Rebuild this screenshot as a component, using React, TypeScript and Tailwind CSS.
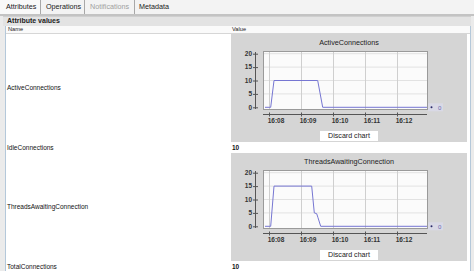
import React from "react";

type Pt = [number, number];

const Y0 = 56.3;
const K = 2.68;
const yv = (v: number) => Y0 - v * K;

const TICKS = [38, 70, 102, 134, 166];
const TIME_LABELS = ["16:08", "16:09", "16:10", "16:11", "16:12"];

const activePts: Pt[] = [
  [34, 0],
  [39.7, 0],
  [43, 10],
  [86.7, 10],
  [91.7, 0],
  [196, 0],
];

const threadsPts: Pt[] = [
  [34, 0],
  [39.7, 0],
  [43, 15],
  [80.7, 15],
  [83.3, 5],
  [85.7, 4.7],
  [87, 3.2],
  [89.7, 0],
  [196, 0],
];

function ChartCell({ title, points }: { title: string; points: Pt[] }) {
  const d = points.map(([x, v], i) => `${i ? "L" : "M"}${x} ${yv(v).toFixed(2)}`).join(" ");
  return (
    <div className="flex h-[108px] w-[236px] flex-col items-center bg-[#d5d5d5]">
      <div className="h-[17px] text-[7.2px] leading-[18px] text-[#222]">{title}</div>
      <svg width="236" height="80" className="block font-['Liberation_Sans',sans-serif]">
        {/* plot area */}
        <rect x="32.5" y="0.5" width="164" height="58" fill="#fbfbfb" stroke="#9a9a9a" strokeWidth="1" />
        {[5, 10, 15, 20].map((v) => (
          <line key={v} x1="33" x2="196" y1={yv(v)} y2={yv(v)} stroke="#e2e2e2" strokeWidth="1" />
        ))}
        {TICKS.map((x) => (
          <line key={x} x1={x + 0.5} x2={x + 0.5} y1="1" y2="58" stroke="#cfcfcf" strokeWidth="1" />
        ))}
        <path d={d} fill="none" stroke="#7676d2" strokeWidth="1" />

        {/* y axis */}
        <line x1="24.5" x2="24.5" y1="1" y2="58" stroke="#555" strokeWidth="1" />
        {[0, 5, 10, 15, 20].map((v) => (
          <g key={v}>
            <line x1="22" x2="27" y1={yv(v) + 0.5} y2={yv(v) + 0.5} stroke="#555" strokeWidth="1" />
            <text x="21" y={yv(v) + 2.3} textAnchor="end" className="fill-[#333] text-[6.5px] font-bold">
              {v}
            </text>
          </g>
        ))}

        {/* x axis */}
        <line x1="32" x2="196" y1="63.5" y2="63.5" stroke="#555" strokeWidth="1" />
        {TICKS.map((x, i) => (
          <g key={x}>
            <line x1={x + 0.5} x2={x + 0.5} y1="61.5" y2="65.5" stroke="#555" strokeWidth="1" />
            <text x={x + 7} y="71.5" textAnchor="middle" className="fill-[#333] text-[6.5px] font-bold">
              {TIME_LABELS[i]}
            </text>
          </g>
        ))}

        {/* last value marker */}
        <rect x="197" y={Y0 - 4} width="15" height="8" fill="#d9d9e6" />
        <circle cx="200.5" cy={Y0} r="1" fill="#2a2a6a" />
        <text x="207" y={Y0 + 2.2} className="fill-[#6a6ab0] text-[6px]">
          0
        </text>
      </svg>
      <button
        type="button"
        className="h-[10px] w-[58px] bg-white text-[7.1px] leading-[10px] text-[#222]"
      >
        Discard chart
      </button>
    </div>
  );
}

function Row({ name, children, tall }: { name: string; children: React.ReactNode; tall?: boolean }) {
  return (
    <div className={`flex ${tall ? "h-[108px]" : "h-[11px]"}`}>
      <div className="flex w-[225px] items-center pl-[1px] text-[6.5px] text-[#111]">{name}</div>
      <div className="flex w-[236px] items-center">{children}</div>
    </div>
  );
}

function Value({ v }: { v: string }) {
  return <span className="pl-[1px] text-[6.5px] font-bold text-[#111]">{v}</span>;
}

export default function App() {
  const tabs = [
    { label: "Attributes", w: "w-[41px] pl-[6px]", active: true },
    { label: "Operations", w: "w-[44px] pl-[5px]" },
    { label: "Notifications", w: "w-[50px] pl-[5px]", disabled: true },
    { label: "Metadata", w: "w-[60px] pl-[4px]" },
  ];

  return (
    <div className="h-[271px] w-[474px] overflow-hidden bg-[#ebebeb] font-['Liberation_Sans',sans-serif]">
      {/* tabs */}
      <div className="flex h-[14px] bg-[#f3f3f3]">
        {tabs.map((t, i) => (
          <div
            key={t.label}
            className={`flex h-full items-center text-[7.2px] ${t.w} ${
              i < tabs.length - 1 ? "border-r border-[#a8a8a8]" : ""
            } ${t.active ? "bg-[#f9f9f9]" : ""} ${t.disabled ? "text-[#a0a0a0]" : "text-[#1a1a1a]"}`}
          >
            {t.label}
          </div>
        ))}
      </div>
      <div className="h-[2px] bg-[#c3c3c3]" />

      {/* panel title */}
      <div className="mx-[3px] flex h-[10px] items-center border-t border-[#cfcfcf] bg-[#e3e3e3] pl-[4px] text-[7px] font-bold text-[#222]">
        Attribute values
      </div>

      {/* table */}
      <div className="ml-[5px] w-[466px] border-x border-[#b4c8da] bg-white">
        <div className="flex h-[8px] border-b border-[#d6d6d6] bg-[#fafafa] text-[5.7px] text-[#222]">
          <div className="flex w-[225px] items-center pl-[2px]">Name</div>
          <div className="flex items-center pl-[1px]">Value</div>
        </div>
        <Row name="ActiveConnections" tall>
          <ChartCell title="ActiveConnections" points={activePts} />
        </Row>
        <Row name="IdleConnections">
          <Value v="10" />
        </Row>
        <Row name="ThreadsAwaitingConnection" tall>
          <ChartCell title="ThreadsAwaitingConnection" points={threadsPts} />
        </Row>
        <Row name="TotalConnections">
          <Value v="10" />
        </Row>
        <div className="h-[10px]" />
      </div>
    </div>
  );
}
